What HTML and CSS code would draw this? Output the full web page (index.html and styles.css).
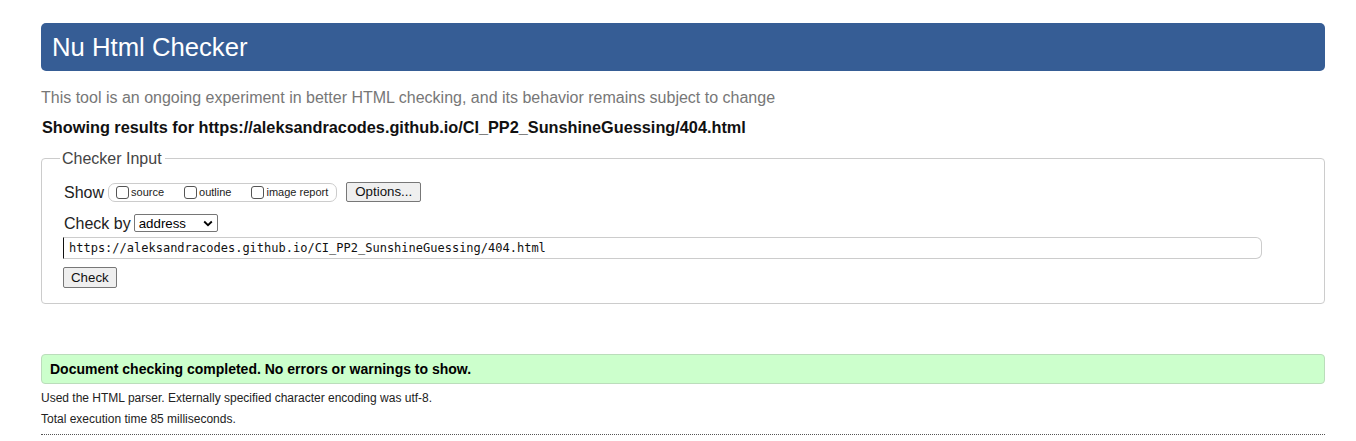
FILE: index.html
```html
<!DOCTYPE html>
<html>
<head>
<meta charset="utf-8">
<link rel="stylesheet" href="styles.css">
</head>
<body>
<div class="page">
  <h1 class="title">Nu Html Checker</h1>
  <p class="intro">This tool is an ongoing experiment in better HTML checking, and its behavior remains subject to change</p>
  <p class="showing">Showing results for https://aleksandracodes.github.io/CI_PP2_SunshineGuessing/404.html</p>
  <fieldset class="checker">
    <legend class="legend">Checker Input</legend>
    <div class="row show-row">
      <span class="label">Show</span>
      <span class="opts">
        <label class="opt"><span class="cb"></span>source</label>
        <label class="opt"><span class="cb"></span>outline</label>
        <label class="opt"><span class="cb"></span>image report</label>
      </span>
      <span class="btn options-btn">Options...</span>
    </div>
    <div class="row checkby-row">
      <span class="label">Check by</span>
      <span class="select">address<svg class="chev" width="10" height="7" viewBox="0 0 10 7"><path d="M1.2 1.5 L5 5.2 L8.8 1.5" fill="none" stroke="#000" stroke-width="1.8"/></svg></span>
    </div>
    <div class="url">https://aleksandracodes.github.io/CI_PP2_SunshineGuessing/404.html</div>
    <div class="check-row"><span class="btn check-btn">Check</span></div>
  </fieldset>
  <div class="success">Document checking completed. No errors or warnings to show.</div>
  <p class="details">Used the HTML parser. Externally specified character encoding was utf-8.</p>
  <p class="details">Total execution time 85 milliseconds.</p>
  <div class="rule"></div>
</div>
</body>
</html>
```
FILE: styles.css
```css
html, body { margin: 0; padding: 0; background: #fff; }
body { font-family: "Liberation Sans", Arial, sans-serif; color: #000; }
.page { margin-left: 41px; width: 1284px; padding-top: 23px; }
.title {
  margin: 0; height: 48px; box-sizing: border-box;
  background: #365d95; color: #fff; border-radius: 5px;
  font-weight: normal; font-size: 25.7px; line-height: 48px;
  padding-left: 11px;
}
.intro { margin: 17px 0 0 0; font-size: 16px; line-height: 19px; color: #777; }
.showing { margin: 11px 0 0 1px; font-size: 16.3px; line-height: 19px; font-weight: bold; color: #111; }
.checker {
  margin: 12px 0 0 0; padding: 14px 0 15px 22px;
  border: 1px solid #ccc; border-radius: 4px;
  min-inline-size: 0;
}
.legend { margin-left: -4px; padding: 0 3px 0 2px; font-size: 16px; color: #444; line-height: 19px; }
.row { display: flex; align-items: center; }
.label { font-size: 16px; line-height: 19px; color: #222; }
.show-row { margin-top: -1px; height: 22px; }
.opts {
  display: inline-flex; align-items: center; margin-left: 4px;
  border: 1px solid #ccc; border-radius: 7px; height: 19px; box-sizing: border-box; padding: 0 8px 0 7px;
  font-size: 11px; color: #222;
}
.opt { display: inline-flex; align-items: center; margin-right: 20px; }
.opt:last-child { margin-right: 0; }
.cb {
  width: 13px; height: 13px; border: 1px solid #555; border-radius: 3px;
  box-sizing: border-box; margin-right: 2px; background: #fff;
}
.btn {
  display: inline-block; box-sizing: border-box;
  border: 1px solid #777; border-radius: 2px; background: #efefef;
  font-size: 13.3px; color: #111; line-height: 19px; height: 21px;
  padding: 0 7px;
}
.options-btn { margin-left: 9px; padding: 0 8px; height: 20px; line-height: 18px; }
.checkby-row { margin-top: 11px; height: 18px; }
.select {
  display: inline-flex; align-items: center; justify-content: space-between;
  width: 84px; height: 18px; box-sizing: border-box; margin-left: 3px;
  border: 1px solid #767676; border-radius: 2px; padding: 0 4px 0 4px;
  font-size: 13.3px; color: #000;
}
.chev { display: block; }
.url {
  margin: 5px 0 0 -1px; width: 1199px; height: 22px; box-sizing: border-box;
  border: 1px solid #ccc; border-left: 1px solid #111;
  border-radius: 0 6px 6px 0; padding-left: 5px;
  font-family: "DejaVu Sans Mono", "Liberation Mono", monospace; font-size: 12px;
  line-height: 20px; color: #111;
}
.check-row { display: flex; margin: 8px 0 0 -1px; }
.success {
  margin-top: 50px; height: 30px; box-sizing: border-box;
  background: #ccffcc; border: 1px solid #bdb; border-radius: 4px;
  font-size: 14px; font-weight: bold; line-height: 28px; padding-left: 8px; color: #000;
}
.details { margin: 7px 0 0 0; font-size: 12px; line-height: 15px; color: #222; }
.details + .details { margin-top: 6px; }
.rule { margin-top: 7px; border-top: 1px dotted #555; }
```
